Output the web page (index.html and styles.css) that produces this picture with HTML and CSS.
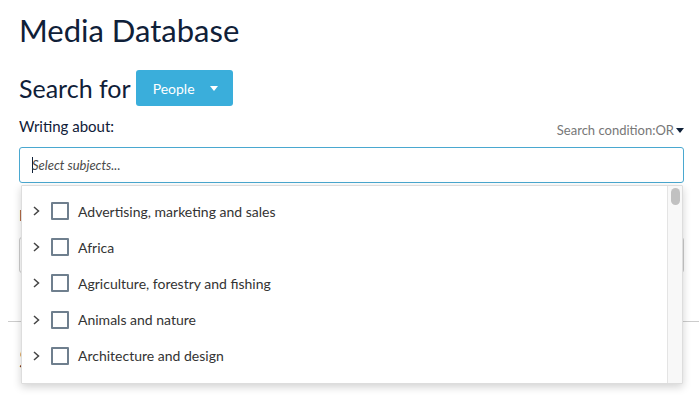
FILE: index.html
```html
<!DOCTYPE html>
<html>
<head>
<meta charset="utf-8">
<link rel="stylesheet" href="styles.css">
</head>
<body>
<div class="page">
  <h1 class="title">Media Database</h1>
  <div class="search-row">
    <span class="search-label">Search for</span>
    <button class="btn-people">People <span class="caret"></span></button>
  </div>
  <div class="field-head">
    <span class="field-label">Writing about:</span>
    <span class="condition">Search condition:OR <span class="caret-dark"></span></span>
  </div>
  <div class="select-wrap">
    <div class="select-input"><span class="cursor"></span><span class="placeholder">Select subjects...</span></div>
    <div class="dropdown">
      <ul class="options">
        <li class="option"><span class="chev"><svg width="7" height="10" viewBox="0 0 7 10"><path d="M1 1 L5.5 5 L1 9" fill="none" stroke="#444" stroke-width="1.5"/></svg></span><span class="box"></span><span class="opt-text">Advertising, marketing and sales</span></li>
        <li class="option"><span class="chev"><svg width="7" height="10" viewBox="0 0 7 10"><path d="M1 1 L5.5 5 L1 9" fill="none" stroke="#444" stroke-width="1.5"/></svg></span><span class="box"></span><span class="opt-text">Africa</span></li>
        <li class="option"><span class="chev"><svg width="7" height="10" viewBox="0 0 7 10"><path d="M1 1 L5.5 5 L1 9" fill="none" stroke="#444" stroke-width="1.5"/></svg></span><span class="box"></span><span class="opt-text">Agriculture, forestry and fishing</span></li>
        <li class="option"><span class="chev"><svg width="7" height="10" viewBox="0 0 7 10"><path d="M1 1 L5.5 5 L1 9" fill="none" stroke="#444" stroke-width="1.5"/></svg></span><span class="box"></span><span class="opt-text">Animals and nature</span></li>
        <li class="option"><span class="chev"><svg width="7" height="10" viewBox="0 0 7 10"><path d="M1 1 L5.5 5 L1 9" fill="none" stroke="#444" stroke-width="1.5"/></svg></span><span class="box"></span><span class="opt-text">Architecture and design</span></li>
        <li class="option"><span class="chev"><svg width="7" height="10" viewBox="0 0 7 10"><path d="M1 1 L5.5 5 L1 9" fill="none" stroke="#444" stroke-width="1.5"/></svg></span><span class="box"></span><span class="opt-text">Arts and culture</span></li>
      </ul>
      <div class="scrollbar"><div class="thumb"></div></div>
    </div>
  </div>
  <div class="field-label second">In</div>
  <div class="plain-input"></div>
  <hr class="divider">
  <h2 class="sub">Search</h2>
</div>
</body>
</html>
```
FILE: styles.css
```css
* { box-sizing: border-box; }
html, body { margin: 0; padding: 0; background: #fff; }
body { font-family: Lato, "Open Sans", sans-serif; color: #0f2038; overflow: hidden; height: 395px; }
.page { padding: 0 15px 0 19px; position: relative; }
.title { font-size: 31px; font-weight: 400; margin: 0; padding-top: 10px; line-height: 40px; color: #0f2038; }
.search-row { display: flex; align-items: center; gap: 5px; margin-top: 20px; height: 36px; }
.search-label { font-size: 25px; line-height: 36px; color: #0f2038; }
.btn-people { background: #3aaedb; color: #fff; border: none; border-radius: 3px; height: 36px; width: 97px; font-family: Lato, sans-serif; font-size: 14px; display: flex; align-items: center; padding: 0 0 0 17px; gap: 15px; }
.caret { width: 0; height: 0; border-left: 4.5px solid transparent; border-right: 4.5px solid transparent; border-top: 5px solid #fff; }
.field-head { display: flex; justify-content: space-between; align-items: flex-end; margin-top: 10px; height: 27px; }
.field-label { font-size: 15px; line-height: 20px; color: #0f2038; align-self: flex-start; }
.condition { font-size: 13px; color: #777; display: flex; align-items: center; gap: 2px; padding-bottom: 5px; }
.caret-dark { width: 0; height: 0; border-left: 4px solid transparent; border-right: 4px solid transparent; border-top: 5px solid #0f2038; }
.select-wrap { position: relative; margin-top: 4px; }
.select-input { height: 36px; border: 1px solid #4aa8d0; border-radius: 3px; display: flex; align-items: center; padding-left: 12px; }
.cursor { width: 1px; height: 16px; background: #0f2038; }
.placeholder { font-size: 13px; font-style: italic; color: #4a4a4a; margin-left: -1px; }
.dropdown { position: absolute; left: 2px; top: 38px; width: 662px; height: 199px; background: #fff; border: 1px solid #ddd; box-shadow: 0 3px 8px rgba(0,0,0,0.18); display: flex; overflow: hidden; z-index: 5; border-radius: 1px; }
.options { list-style: none; margin: 0; padding: 7px 0 0 0; flex: 1; }
.option { display: flex; align-items: center; height: 36.2px; padding-left: 11px; }
.chev { width: 7px; height: 10px; display: flex; }
.box { width: 18px; height: 18px; border: 2px solid #6f7f8e; border-radius: 1px; margin-left: 11px; }
.opt-text { font-size: 14px; color: #333; margin-left: 9px; }
.scrollbar { width: 15px; background: #f8f8f8; border-left: 1px solid #e4e4e4; padding: 2px 2px 0 3px; }
.thumb { height: 17px; background: #c1c1c1; border-radius: 5px; }
.second { margin-top: 22px; }
.plain-input { height: 36px; border: 1px solid #ccc; border-radius: 3px; margin-top: 12px; }
.divider { border: none; border-top: 1px solid #ccc; margin: 48px -15px 0 -11px; }
.sub { font-size: 26px; font-weight: 400; line-height: 30px; margin: 22px 0 0 0; color: #0f2038; }
```
